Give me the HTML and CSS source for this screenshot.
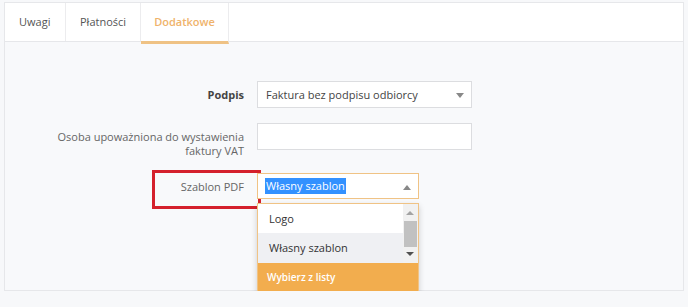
FILE: index.html
```html
<!DOCTYPE html>
<html lang="pl">
<head>
    <meta charset="UTF-8">
    <meta name="viewport" content="width=device-width, initial-scale=1.0">
    <title>Dodatkowe</title>
    <link rel="stylesheet" href="styles.css">
</head>
<body>
    <div class="panel">
        <!-- Tabs -->
        <div class="tabs">
            <div class="tab">Uwagi</div>
            <div class="tab">Płatności</div>
            <div class="tab active">Dodatkowe</div>
        </div>

        <div class="tab-content">
            <div class="form-row">
                <label class="label bold">Podpis</label>
                <div class="select">
                    <span>Faktura bez podpisu odbiorcy</span>
                    <span class="caret down"></span>
                </div>
            </div>

            <div class="form-row">
                <label class="label two-line">Osoba upoważniona do wystawienia<br>faktury VAT</label>
                <div class="input"></div>
            </div>

            <div class="form-row">
                <label class="label marked">Szablon PDF</label>
                <div class="select-wrap">
                    <div class="select open">
                        <span class="selected-text">Własny szablon</span>
                        <span class="caret up"></span>
                    </div>
                    <div class="dropdown">
                        <div class="options">
                            <div class="option-list">
                                <div class="option">Logo</div>
                                <div class="option hover">Własny szablon</div>
                            </div>
                            <div class="scrollbar">
                                <span class="sb-arrow sb-up"></span>
                                <span class="sb-thumb"></span>
                                <span class="sb-arrow sb-down"></span>
                            </div>
                        </div>
                        <div class="option-footer">Wybierz z listy</div>
                    </div>
                </div>
            </div>
        </div>
    </div>
</body>
</html>
```

FILE: styles.css
```css
* {
    margin: 0;
    padding: 0;
    box-sizing: border-box;
    font-family: 'Open Sans', sans-serif;
}

body {
    background: #f7f8fa;
    font-size: 11px;
    color: #555;
    padding: 2px 4px 0 4px;
}

.panel {
    border: 1px solid #e6e7ea;
    background: #f8f9fb;
    height: 289px;
}

.tabs {
    display: flex;
    background: #fff;
    height: 39px;
    border-bottom: 1px solid #e6e7ea;
}

.tab {
    padding: 0 14px;
    line-height: 38px;
    border-right: 1px solid #ececee;
    color: #555;
}

.tab:nth-child(1) {
    width: 61px;
}

.tab:nth-child(2) {
    width: 75px;
}

.tab.active {
    width: 88px;
    color: #efb36b;
    font-weight: 600;
    border-bottom: 3px solid #efc284;
    height: 41px;
    text-align: center;
    padding: 0;
}

.tab-content {
    padding-top: 39px;
    display: flex;
    flex-direction: column;
    gap: 15px;
}

.form-row {
    display: grid;
    grid-template-columns: 239px 215px;
    column-gap: 13px;
    align-items: start;
}

.label {
    text-align: right;
    padding-top: 6px;
    line-height: 15px;
    color: #666;
}

.label.two-line {
    padding-top: 7px;
    line-height: 14px;
}

.label.bold {
    font-weight: 700;
    color: #444;
}

.label.marked {
    position: relative;
    padding-top: 6px;
}

.label.marked::after {
    content: "";
    position: absolute;
    left: 147px;
    top: -3px;
    width: 103px;
    height: 33px;
    border: 3px solid #d4202c;
}

.select, .input {
    height: 27px;
    background: #fff;
    border: 1px solid #dcdde0;
    position: relative;
    display: flex;
    align-items: center;
    padding-left: 8px;
    color: #444;
}

.select-wrap {
    position: relative;
    width: 162px;
}

.select.open {
    border-color: #f0c385;
    height: 26px;
    padding-left: 7px;
}

.selected-text {
    background: #3391ff;
    color: #fff;
    padding: 0 1px;
    line-height: 16px;
}

.caret {
    position: absolute;
    right: 7px;
    top: 11px;
    width: 0;
    height: 0;
    border-left: 4px solid transparent;
    border-right: 4px solid transparent;
}

.caret.down {
    border-top: 5px solid #888;
}

.caret.up {
    border-bottom: 5px solid #888;
}

.dropdown {
    position: absolute;
    top: 30px;
    left: 0;
    width: 162px;
    background: #fff;
    border: 1px solid #f0c385;
    box-shadow: 0 3px 6px rgba(0, 0, 0, 0.18);
}

.options {
    display: flex;
    height: 59px;
}

.option-list {
    flex: 1;
}

.option {
    height: 29px;
    line-height: 29px;
    padding-left: 11px;
    color: #333;
}

.option.hover {
    background: #eff0f3;
    height: 30px;
}

.scrollbar {
    width: 15px;
    background: #f1f1f1;
    position: relative;
}

.sb-arrow {
    position: absolute;
    left: 3px;
    width: 0;
    height: 0;
    border-left: 4px solid transparent;
    border-right: 4px solid transparent;
}

.sb-up {
    top: 7px;
    border-bottom: 4px solid #a3a3a3;
}

.sb-down {
    bottom: 7px;
    border-top: 4px solid #505050;
}

.sb-thumb {
    position: absolute;
    left: 1px;
    top: 17px;
    width: 13px;
    height: 26px;
    background: #c1c1c1;
}

.option-footer {
    background: #f2ad4e;
    color: #fff;
    font-size: 10px;
    font-weight: 600;
    height: 28px;
    line-height: 28px;
    padding-left: 9px;
}
```
